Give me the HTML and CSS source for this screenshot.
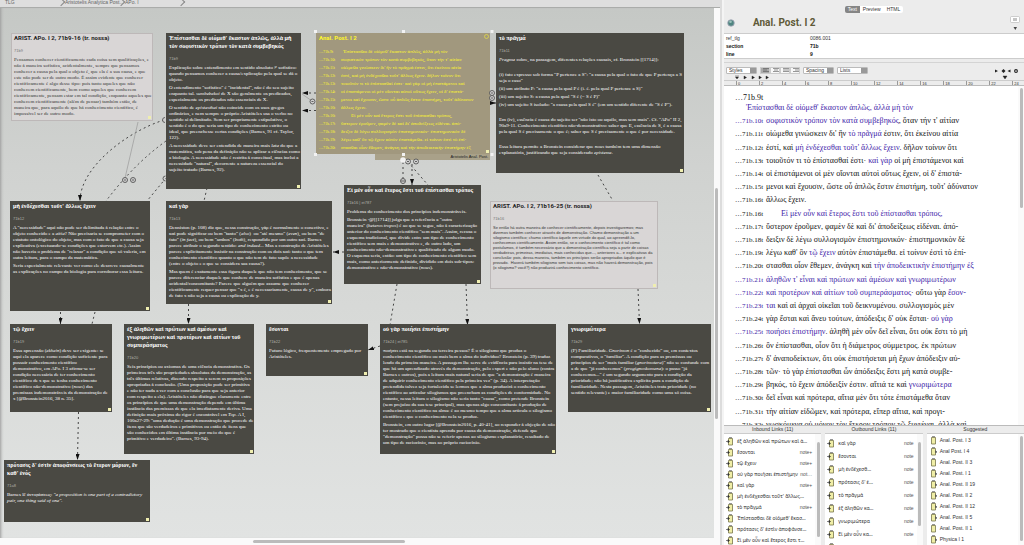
FILE: index.html
```html
<!DOCTYPE html>
<html lang="pt">
<head>
<meta charset="utf-8">
<title>Anal. Post. I 2</title>
<link rel="stylesheet" href="styles.css">
</head>
<body>
<svg class="defs" aria-hidden="true">
  <symbol id="doc" viewBox="0 0 8 9"><path d="M2.5 1.5h4v6.5h-4z" fill="#f0eea6" stroke="#77754a" stroke-width=".8"/><path d="M3.5 1v-.6h2V1" stroke="#555" fill="none" stroke-width=".7"/></symbol>
  <symbol id="doc-in" viewBox="0 0 8 9"><use href="#doc"/><path d="M0 4.500h2M2 3.300l1.500 1.200-1.500 1.200z" stroke="#333" stroke-width=".6" fill="#333"/></symbol>
  <symbol id="doc-out" viewBox="0 0 8 9"><use href="#doc"/><path d="M6 4.500h1M6.500 3.500l1.500 1.500-1.500 1z" stroke="#555" stroke-width=".5" fill="#555"/></symbol>
</svg>
<div class="app">
  <main class="map">
    <nav class="crumbs">
      <a class="crumb" href="#">TLG</a><a class="crumb" href="#">Aristotelis Analytica Post…</a><a class="crumb" href="#">APo. I</a>
    </nav>
    <div class="stage">
      <div class="canvas">
        <svg class="links" width="714" height="530" viewBox="0 8 714 530" aria-hidden="true">
          <defs>
            <marker id="arrow" viewBox="0 0 6 4" refX="6" refY="2" markerWidth="6" markerHeight="4" markerUnits="userSpaceOnUse" orient="auto"><path d="M0 0l6 2-6 2z" fill="#111"/></marker>
          </defs>
          <g class="dash">
            <path d="M164 120C126 132 80 168 80 201" marker-end="url(#arrow)"/>
            <path d="M166 141Q134 164 106 201"/>
            <path d="M166 178L147 201"/>
            <path d="M207 188L204 201"/>
            <path d="M316 93H302" marker-end="url(#arrow)"/>
            <path d="M316 110.500H302" marker-end="url(#arrow)"/>
            <path d="M489 103H496" marker-end="url(#arrow)"/>
            <path d="M403 162V185"/>
            <path d="M412 164V185" marker-end="url(#arrow)"/>
            <path d="M408 162L428 185"/>
            <path d="M598 175L613 201"/>
            <path d="M344 252H333" marker-end="url(#arrow)"/>
            <path d="M60.500 312V324" marker-end="url(#arrow)"/>
            <path d="M95 312L92 324"/>
            <path d="M188.500 304V324" marker-end="url(#arrow)"/>
            <path d="M397 284L390 325"/>
            <path d="M466 284L467.500 325" marker-end="url(#arrow)"/>
            <path d="M638 289L639.500 324" marker-end="url(#arrow)"/>
            <path d="M78.500 412L77.500 460" marker-end="url(#arrow)"/>
            <path d="M380 346L368 350" marker-end="url(#arrow)"/>
          </g>
          <path class="thin" d="M138 122L125 178M302 94L312 101"/>
        </svg>

        <article class="note light n1">
          <h2>ARIST. APo. I 2, 71b9-16 (tr. nossa)</h2>
          <small>71b9</small>
          <p>Pensamos conhecer cientificamente cada coisa sem qualificações, e
não à maneira sofística, acidentalmente, sempre que pensamos
conhecer a causa pela qual o objeto é, que ela é a sua causa, e que
este não pode ser de outro modo. É assim evidente que conhecer
cientificamente é algo desse tipo: pois tanto aqueles que não
conhecem cientificamente, bem como aqueles que conhecem
cientificamente, pensam estar em tal condição, enquanto aqueles que
conhecem cientificamente (além de pensar) também estão, de
maneira que, para aquilo de que há conhecimento científico, é
impossível ser de outro modo.</p>
        </article>
        <article class="note n2">
          <h2>Ἐπίστασθαι δὲ οἰόμεθ' ἕκαστον ἁπλῶς, ἀλλὰ μὴ
τὸν σοφιστικὸν τρόπον τὸν κατὰ συμβεβηκός</h2>
          <small>71b9</small>
          <p>Explicação sobre entendimento em sentido absoluto ≠ sofístico:
quando pensamos conhecer a causa/explicação pela qual se dá o
objeto.</p>
          <p>O entendimento "sofístico" é "incidental", não é do seu sujeito
enquanto tal. <i>sumbebēkoi</i> de X são geralmente os predicados,
especialmente os predicados não essenciais de X.</p>
          <p>O sentido de <i>epistasthai</i> não coincide com os usos gregos
ordinários, e nem sempre o próprio Aristóteles usa o verbo no
sentido aí delimitado. Sem ser propriamente estipulativo, o
sentido é o do que seria um tipo de conhecimento estrito ou
ideal, que preenchesse certas condições (Barnes, 91 cf. Taylor,
122).</p>
          <p>A necessidade deve ser entendida de maneira mais <i>lata</i> do que a
matemática, sob pena da definição não se aplicar a ciências como
a biologia. A necessidade não é restrita à conceitual, mas inclui a
necessidade "natural", decorrente a natureza essencial do
sujeito tratado (Barnes, 92).</p>
        </article>
        <div class="alias">Aristotelis Anal. Post.</div>
        <article class="note picked n3">
          <h2>Anal. Post. I 2</h2>
          <ol>
            <li><b>…71b.9t</b><span class="in">Ἐπίστασθαι δὲ οἰόμεθ' ἕκαστον ἁπλῶς, ἀλλὰ μὴ τὸν</span></li>
            <li><b>…71b.10t</b><span>σοφιστικὸν τρόπον τὸν κατὰ συμβεβηκός, ὅταν τήν τ' αἰτίαν</span></li>
            <li><b>…71b.11t</b><span>οἰώμεθα γινώσκειν δι' ἣν τὸ πρᾶγμά ἐστιν, ὅτι ἐκείνου αἰτία</span></li>
            <li><b>…71b.12t</b><span>ἐστί, καὶ μὴ ἐνδέχεσθαι τοῦτ' ἄλλως ἔχειν. δῆλον τοίνυν ὅτι</span></li>
            <li><b>…71b.13t</b><span>τοιοῦτόν τι τὸ ἐπίστασθαί ἐστι· καὶ γὰρ οἱ μὴ ἐπιστάμενοι καὶ</span></li>
            <li><b>…71b.14t</b><span>οἱ ἐπιστάμενοι οἱ μὲν οἴονται αὐτοὶ οὕτως ἔχειν, οἱ δ' ἐπιστά-</span></li>
            <li><b>…71b.15t</b><span>μενοι καὶ ἔχουσιν, ὥστε οὗ ἁπλῶς ἔστιν ἐπιστήμη, τοῦτ' ἀδύνατον</span></li>
            <li><b>…71b.16t</b><span>ἄλλως ἔχειν.</span></li>
            <li><b>…71b.16t</b><span class="in2">Εἰ μὲν οὖν καὶ ἕτερος ἔστι τοῦ ἐπίστασθαι τρόπος,</span></li>
            <li><b>…71b.17t</b><span>ὕστερον ἐροῦμεν, φαμὲν δὲ καὶ δι' ἀποδείξεως εἰδέναι. ἀπό-</span></li>
            <li><b>…71b.18t</b><span>δειξιν δὲ λέγω συλλογισμὸν ἐπιστημονικόν· ἐπιστημονικὸν δὲ</span></li>
            <li><b>…71b.19t</b><span>λέγω καθ' ὃν τῷ ἔχειν αὐτὸν ἐπιστάμεθα. εἰ τοίνυν ἐστὶ τὸ ἐπί-</span></li>
            <li><b>…71b.20t</b><span>στασθαι οἷον ἔθεμεν, ἀνάγκη καὶ τὴν ἀποδεικτικὴν ἐπιστήμην ἐξ</span></li>
          </ol>
        </article>
        <article class="note n4">
          <h2>τὸ πρᾶγμά</h2>
          <small>71b11</small>
          <p><i>Pragma</i> cobre, na passagem, diferentes relações causais, cf. Bronstein [[1714]]:</p>
          <p class="apart">(i) fato expresso sob forma "P pertence a S": "a causa pela qual o fato de que P pertença a S
seja o caso"</p>
          <p>(ii) um atributo P: "a causa pela qual P é (i. é. pela qual P pertence a S)"</p>
          <p>(iii) um sujeito S: a causa pela qual "S é (= S é P)"</p>
          <p>(iv) um sujeito S isolado: "a causa pela qual S é" (em um sentido diferente de "S é P").</p>
          <p class="apart">Em (iv), essência é causa do sujeito ser "não isto ou aquilo, mas sem mais". Cf. "APo" II 2,
90a9-11. Conhecimento científico não-demonstrativo: saber que E, essência de S, é a causa
pela qual S é precisamente o que é; saber que S é precisamente o que é por necessidade.</p>
          <p class="apart">Essa leitura permite a Bronstein considerar que <i>nous</i> também tem uma dimensão
explanatória, justificando que seja considerado <i>epistēmē</i>.</p>
        </article>
        <article class="note n5">
          <h2>μὴ ἐνδέχεσθαι τοῦτ' ἄλλως ἔχειν</h2>
          <small>71b12</small>
          <p>A "necessidade" aqui não pode ser delimitada à relação entre o
objeto conhecido e a <i>aitia</i>? Não precisaria se comprometer com o
estatuto ontológico do objeto, mas com o fato de que a causa seja
explicativa (excetuando-se condições que estorvem etc.). Assim
não haveria o problema de "relaxar" a condição que só valeria, em
outra leitura, para o campo da matemática.</p>
          <p>Seria especialmente relevante ver como ele descreve causalmente
as explicações no campo da biologia para corroborar essa leitura.</p>
        </article>
        <article class="note n6">
          <h2>καὶ γὰρ</h2>
          <small>71b13</small>
          <p>Denniston (p. 108) diz que, nessa construção, γάρ é normalmente o conectivo, e
καί pode significar ou bem "tanto" (<i>also</i>)  ou "até mesmo" (<i>even</i>), ou bem "de
fato" (<i>in fact</i>), ou bem "ambos" (<i>both</i>), respondido por um outro καί. Barnes
parece atribuir o segundo sentido: <i>and indeed</i>... Mas a construção de Aristóteles
parece explicitamente insistir na construção com os dois καί: tanto o que tem
conhecimento científico quanto o que não tem de fato supõe a necessidade
(entre o objeto e o que se considera sua causa?).</p>
          <p>Mas quem é exatamente essa figura daquele que não tem conhecimento, que se
parece diferenciar daquele que conhece de maneira sofística e que é apenas
acidental/concomitante? Parece que alguém que assume que conhecer
cientificamente requer pensar que "x é, e é necessariamente, causa de y", embora
de fato x não seja a causa ou explicação de y.</p>
        </article>
        <article class="note n7">
          <h2>Εἰ μὲν οὖν καὶ ἕτερος ἔστι τοῦ ἐπίστασθαι τρόπος</h2>
          <small>71b16 | et787</small>
          <p>Problema do conhecimento dos princípios indemonstráveis.</p>
          <p>Bronstein -@[[1714]] julga que a referência a "outra
maneira" (<i>heteros tropos</i>) é ao que se segue, não à caracterização
anterior do conhecimento científico "sem mais". Assim, recusa o
esquema tradicional, que divide entre um tipo de conhecimento
científico sem mais e demonstrativo e, de outro lado, um
conhecimento não-demonstrativo e qualificado de algum modo.
O esquema seria, então: um tipo de conhecimento científico sem
mais, como anteriormente definido, dividido em dois sub-tipos:
demonstrativo e não-demonstrativo (<i>nous</i>).</p>
        </article>
        <article class="note light n8">
          <h2>ARIST. APo. I 2, 71b16-25 (tr. nossa)</h2>
          <small>71b16</small>
          <p>Se então há outra maneira de conhecer cientificamente, depois investigaremos; mas
dizemos também conhecer através de demonstração. Chamo demonstração a um
silogismo científico; chamo científico àquele em virtude do qual, ao apreendê-lo,
conhecemos cientificamente. Assim então, se o conhecimento científico é tal como
postulamos, é também necessário que a demonstração científica seja a partir de coisas
verdadeiras, primeiras, imediatas, mais conhecidas que..., anteriores a... e explicativas da
conclusão: pois, dessa maneira, também os princípios serão apropriados àquilo que é
provado.  Haverá também silogismo sem tais coisas, mas não haverá demonstração, pois
(o silogismo? você?) não produzirá conhecimento científico.</p>
        </article>
        <article class="note n9">
          <h2>τῷ ἔχειν</h2>
          <small>71b19</small>
          <p>Essa apreensão (<i>ekhein</i>) deve ser exigente: se
aqui ela aparece como condição suficiente para
possuir conhecimento científico
demonstrativo, em APo. I 3 afirma-se ser
condição necessária de ter conhecimento
científico de x que se tenha conhecimento
científico não-demonstrativo (<i>nous</i>) das
premissas indemonstráveis da demonstração de
x [@Bronstein2016, 38 n. 35].</p>
        </article>
        <article class="note n10">
          <h2>ἐξ ἀληθῶν καὶ πρώτων καὶ ἀμέσων καὶ
γνωριμωτέρων καὶ προτέρων καὶ αἰτίων τοῦ
συμπεράσματος</h2>
          <small>71b20</small>
          <p>Seis princípios ou axiomas de uma ciência demonstrativa. Os
primeiros três são propriedades absolutas da demonstração, as
três últimas relativas, dizendo respeito a serem as proposições
apropriadas à conclusão. (Uma proposição pode ser primitiva
e não ter nada a ver com a conclusão para que seja anterior
com respeito a ela). Aristóteles não distingue claramente entre
os princípios de que uma demonstração depende em última
instância das premissas de que ela imediatamente deriva. Uma
definição mais próxima do rigor é encontrável em <i>Top.</i> A I,
100a27-29: "uma dedução é uma demonstração que procede de
itens que são verdadeiros e primitivos ou então de itens que
são conhecidos em última instância por meio do que é
primitivo e verdadeiro". (Barnes, 93-94).</p>
        </article>
        <article class="note n11">
          <h2>ἔσονται</h2>
          <small>71b22</small>
          <p>Futuro lógico, frequentemente empregado por
Aristóteles.</p>
        </article>
        <article class="note n12">
          <h2>οὐ γὰρ ποιήσει ἐπιστήμην</h2>
          <small>71b24 | et785</small>
          <p>ποιήσει está na segunda ou terceira pessoa? É o silogismo que produz o
conhecimento científico ou mais bem a alma do indivíduo? Bronstein (p. 39) traduz
lendo da primeira maneira. A passagem lhe serve de evidência para insistir na tese de
que há um aprendizado através da demonstração, pelo expert e não pelo aluno (contra
Barnes e outros), pois a leitura mais natural seria de que "a demonstração é maneira
de adquirir conhecimento científico pela primeira vez" (p. 34). A interpretação
pretendida talvez seja fortalecida se lermos que a alma produzirá o conhecimento
científico ao articular silogismos que preencham as condições de conformidade. No
entanto, nessa leitura o silogismo não seria tanto "causa", como pretende Bronstein
(sem prejuízo da sua tese principal), mas apenas algo concomitante à produção de
conhecimento científico na alma: é ao mesmo tempo que a alma articula o silogismo
científico e que o conhecimento nela se produz.</p>
          <p>Bronstein, em outro lugar [@Bronstein2016, p. 40-41], ao responder à objeção de não
ter mostrado que o cientista aprenda por causa da demonstração, defende que
"demonstração" possa não se referir apenas ao silogismo explanatório, resultado de
um tipo de raciocínio, mas ao próprio raciocínio.</p>
        </article>
        <article class="note n13">
          <h2>γνωριμώτερα</h2>
          <small>71b29</small>
          <p>(F) Familiaridade. <i>Gnōrimon</i> é o "conhecido" ou, em contextos
comparativos, o "familiar". A condição para as premissas ou
princípios de ser "mais familiar (<i>gnōrimōtera</i>)" não se confunde com
a de que "já conhecemos" (<i>progignōskomena</i>): o passo "já
conhecemos..." é um segundo argumento para a condição da
prioridade; não há justificativa explícita para a condição de
familiaridade. Nesta passagem, Aristóteles trata prioridade (no
sentido relevante) e maior familiaridade como uma só coisa.</p>
        </article>
        <article class="note n14">
          <h2>πρότασις δ' ἐστὶν ἀποφάνσεως τὸ ἕτερον μόριον, ἓν
καθ' ἑνός</h2>
          <small>71a8</small>
          <p>Barnes lê ἀντιφάσεως: <i>"a proposition is one part of a contradictory
pair, one thing said of one".</i></p>
        </article>

        <svg class="links" width="714" height="530" viewBox="0 8 714 530" aria-hidden="true">
          <g class="knob">
            <circle cx="125" cy="180" r="2.500"/><circle cx="133" cy="180" r="2.500"/>
            <path d="M165 117.500a2.500 2.500 0 0 0 0 5M165.500 176a2.500 2.500 0 0 0 0 5"/>
            <circle cx="312.500" cy="101.500" r="2.500"/>
            <circle cx="492" cy="93" r="2.500"/><circle cx="492" cy="98" r="2.500"/>
            <circle cx="408" cy="161.500" r="2.500"/><circle cx="416" cy="161.500" r="2.500"/><circle cx="403" cy="181" r="2.500"/>
            <path d="M124 180h2M132 180h2M311.500 101.500h2M491 93h2M491 98h2M407 161.500h2M415 161.500h2M401 181h4"/>
          </g>
          <g fill="#f2f2f2">
            <path d="M314 30h3v3h-3zM402 30h3v3h-3zM490.500 30h3v3h-3zM314 153h3v3h-3zM402 153h3v3h-3zM490.500 153h3v3h-3z"/>
            <circle cx="403" cy="160" r="2.800"/>
          </g>
          <circle cx="486.500" cy="36.500" r="2" fill="none" stroke="#dfd84a" stroke-width=".8"/>
        </svg>
      </div>
      <div class="vbar"><i></i></div>
      <div class="hbar"><i></i></div>
    </div>
  </main>

  <aside class="pane">
    <div class="tabs"><button class="on">Text</button><button>Preview</button><button>HTML</button></div>
    <header class="head">
      <svg width="8" height="8" viewBox="0 0 8 8" aria-hidden="true"><circle cx="4" cy="4" r="3.300" fill="#4f8580" stroke="#aab" stroke-width=".8"/><circle cx="3.500" cy="2.800" r="1.300" fill="#9cc2bb"/></svg>
      <h1>Anal. Post. I 2</h1>
      <button class="menu" aria-label="Menu"><svg width="10" height="15" viewBox="0 0 10 15"><rect x=".5" y=".5" width="9" height="6" rx="1" fill="#fff" stroke="#bbb" stroke-width=".7"/><path d="M3 2.500h4M3 3.500h4M3 4.500h4" stroke="#888" stroke-width=".5"/><path d="M3.500 11h3.500l-1.700 3z" fill="#444"/></svg></button>
    </header>
    <table class="attrs">
      <tr><th>ref_tlg</th><td>0086.001</td></tr>
      <tr class="b"><th>section</th><td>71b</td></tr>
      <tr class="b"><th>line</th><td>9</td></tr>
    </table>
    <div class="tools">
      <select aria-label="Styles"><option>Styles</option></select>
      <div class="aligns">
        <button class="on" aria-label="Left"><svg viewBox="0 0 6 5"><path d="M0 .5h6M0 2h4M0 3.500h6"/></svg></button><button aria-label="Center"><svg viewBox="0 0 6 5"><path d="M0 .5h6M1 2h4M0 3.500h6"/></svg></button><button aria-label="Justify"><svg viewBox="0 0 6 5"><path d="M0 .5h6M0 2h6M0 3.500h6"/></svg></button><button aria-label="Right"><svg viewBox="0 0 6 5"><path d="M0 .5h6M2 2h4M0 3.500h6"/></svg></button>
      </div>
      <select aria-label="Spacing"><option>Spacing</option></select>
      <select aria-label="Lists"><option>Lists</option></select>
      <svg class="stops" width="25" height="6" viewBox="0 0 25 6" aria-hidden="true"><path d="M1 1.500l3 1.500-3 1.500zM9.500 1l2 2-2 2-2-2zM16.500 1.500l-3 1.500 3 1.500z" fill="#222"/><circle cx="22" cy="3" r="1.400" fill="none" stroke="#222" stroke-width="1.100"/></svg>
    </div>
    <div class="ruler">
      <svg class="pins" width="100%" height="5" aria-hidden="true"><path d="M11 1h4M11.500 2h3l-1.500 2zM20 1l2.500 1.500L20 4zM28 1l2.500 1.500L28 4zM35 1l2.500 1.500L35 4zM42 1l2.500 1.500L42 4zM279 1h4l-2 3z" fill="#222" stroke="#222" stroke-width=".4"/></svg>
      <ol><li>0</li><li>2</li><li>4</li><li>6</li><li>8</li><li>10</li><li>12</li><li>14</li><li>16</li><li>18</li><li>20</li><li>22</li><li>24</li></ol>
    </div>
    <section class="editor">
      <div class="text">
        <div class="first"><p>…71b.9t</p><p class="t1"><a href="#">Ἐπίστασθαι δὲ οἰόμεθ' ἕκαστον ἁπλῶς, ἀλλὰ μὴ τὸν</a></p></div>
        <p><a href="#"><b>…71b.10t</b>σοφιστικὸν τρόπον τὸν κατὰ συμβεβηκός</a>, ὅταν τήν τ' αἰτίαν</p>
        <p><b>…71b.11t</b>οἰώμεθα γινώσκειν δι' ἣν <a href="#">τὸ πρᾶγμά</a> ἐστιν, ὅτι ἐκείνου αἰτία</p>
        <p><b>…71b.12t</b>ἐστί, καὶ <a href="#">μὴ ἐνδέχεσθαι τοῦτ' ἄλλως ἔχειν</a>. δῆλον τοίνυν ὅτι</p>
        <p><b>…71b.13t</b>τοιοῦτόν τι τὸ ἐπίστασθαί ἐστι· <a href="#">καὶ γὰρ</a> οἱ μὴ ἐπιστάμενοι καὶ</p>
        <p><b>…71b.14t</b>οἱ ἐπιστάμενοι οἱ μὲν οἴονται αὐτοὶ οὕτως ἔχειν, οἱ δ' ἐπιστά-</p>
        <p><b>…71b.15t</b>μενοι καὶ ἔχουσιν, ὥστε οὗ ἁπλῶς ἔστιν ἐπιστήμη, τοῦτ' ἀδύνατον</p>
        <p><b>…71b.16t</b>ἄλλως ἔχειν.</p>
        <p><b class="wide">…71b.16t</b><a href="#">Εἰ μὲν οὖν καὶ ἕτερος ἔστι τοῦ ἐπίστασθαι τρόπος,</a></p>
        <p><b>…71b.17t</b>ὕστερον ἐροῦμεν, φαμὲν δὲ καὶ δι' ἀποδείξεως εἰδέναι. ἀπό-</p>
        <p><b>…71b.18t</b>δειξιν δὲ λέγω συλλογισμὸν ἐπιστημονικόν· ἐπιστημονικὸν δὲ</p>
        <p><b>…71b.19t</b>λέγω καθ' ὃν <a href="#">τῷ ἔχειν</a> αὐτὸν ἐπιστάμεθα. εἰ τοίνυν ἐστὶ τὸ ἐπί-</p>
        <p><b>…71b.20t</b>στασθαι οἷον ἔθεμεν, ἀνάγκη καὶ <a href="#">τὴν ἀποδεικτικὴν ἐπιστήμην ἐξ</a></p>
        <p><a href="#"><b>…71b.21t</b>ἀληθῶν τ' εἶναι καὶ πρώτων καὶ ἀμέσων καὶ γνωριμωτέρων</a></p>
        <p><a href="#"><b>…71b.22t</b>καὶ προτέρων καὶ αἰτίων τοῦ συμπεράσματος</a>· οὕτω γὰρ <a href="#">ἔσον-</a></p>
        <p><a href="#"><b>…71b.23t</b>ται</a> καὶ αἱ ἀρχαὶ οἰκεῖαι τοῦ δεικνυμένου. συλλογισμὸς μὲν</p>
        <p><b>…71b.24t</b>γὰρ ἔσται καὶ ἄνευ τούτων, ἀπόδειξις δ' οὐκ ἔσται· <a href="#">οὐ γὰρ</a></p>
        <p><a href="#"><b>…71b.25t</b>ποιήσει ἐπιστήμην</a>. ἀληθῆ μὲν οὖν δεῖ εἶναι, ὅτι οὐκ ἔστι τὸ μὴ</p>
        <p><b>…71b.26t</b>ὂν ἐπίστασθαι, οἷον ὅτι ἡ διάμετρος σύμμετρος. ἐκ πρώτων</p>
        <p><b>…71b.27t</b>δ' ἀναποδείκτων, ὅτι οὐκ ἐπιστήσεται μὴ ἔχων ἀπόδειξιν αὐ-</p>
        <p><b>…71b.28t</b>τῶν· τὸ γὰρ ἐπίστασθαι ὧν ἀπόδειξις ἔστι μὴ κατὰ συμβε-</p>
        <p><b>…71b.29t</b>βηκός, τὸ ἔχειν ἀπόδειξίν ἐστιν. αἴτιά τε καὶ <a href="#">γνωριμώτερα</a></p>
        <p><b>…71b.30t</b>δεῖ εἶναι καὶ πρότερα, αἴτια μὲν ὅτι τότε ἐπιστάμεθα ὅταν</p>
        <p><b>…71b.31t</b>τὴν αἰτίαν εἰδῶμεν, καὶ πρότερα, εἴπερ αἴτια, καὶ προγι-</p>
        <p><b>…71b.32t</b>νωσκόμενα οὐ μόνον τὸν ἕτερον τρόπον τῷ ξυνιέναι, ἀλλὰ καὶ</p>
      </div>
      <div class="vbar"><i></i></div>
    </section>
    <section class="lists">
      <div class="list inbound">
        <h3>Inbound Links (11)</h3>
        <ul>
          <li><svg><use href="#doc-in"/></svg><a href="#">ἐξ ἀληθῶν καὶ πρώτων καὶ ἀ…</a></li>
          <li><svg><use href="#doc-in"/></svg><a href="#">ἔσονται</a><em>note+</em></li>
          <li><svg><use href="#doc-in"/></svg><a href="#">τῷ ἔχειν</a><em>note+</em></li>
          <li><svg><use href="#doc-in"/></svg><a href="#">οὐ γὰρ ποιήσει ἐπιστήμην</a><em>not…</em></li>
          <li><svg><use href="#doc-in"/></svg><a href="#">καὶ γὰρ</a><em>note+</em></li>
          <li><svg><use href="#doc-in"/></svg><a href="#">μὴ ἐνδέχεσθαι τοῦτ' ἄλλως…</a></li>
          <li><svg><use href="#doc-in"/></svg><a href="#">τὸ πρᾶγμά</a><em>note+</em></li>
          <li><svg><use href="#doc-in"/></svg><a href="#">Ἐπίστασθαι δὲ οἰόμεθ' ἕκασ…</a></li>
          <li><svg><use href="#doc-in"/></svg><a href="#">πρότασις δ' ἐστὶν ἀποφάνσε…</a></li>
          <li><svg><use href="#doc-in"/></svg><a href="#">Εἰ μὲν οὖν καὶ ἕτερος ἔστι τ…</a></li>
        </ul>
        <div class="vbar"><i></i></div>
      </div>
      <div class="list outbound">
        <h3>Outbound Links (11)</h3>
        <ul>
          <li><svg><use href="#doc-in"/></svg><a href="#">καὶ γὰρ</a><em>note</em></li>
          <li><svg><use href="#doc-in"/></svg><a href="#">ἔσονται</a><em>note</em></li>
          <li><svg><use href="#doc-in"/></svg><a href="#">μὴ ἐνδέχεσθ…</a><em>note</em></li>
          <li><svg><use href="#doc-in"/></svg><a href="#">πρότασις δ' ἐ…</a><em>note</em></li>
          <li><svg><use href="#doc-in"/></svg><a href="#">τὸ πρᾶγμά</a><em>note</em></li>
          <li><svg><use href="#doc-in"/></svg><a href="#">ἐξ ἀληθῶν κα…</a><em>note</em></li>
          <li><svg><use href="#doc-in"/></svg><a href="#">γνωριμώτερα</a><em>note</em></li>
          <li><svg><use href="#doc-in"/></svg><a href="#">Εἰ μὲν οὖν κα…</a><em>note</em></li>
          <li><svg><use href="#doc-in"/></svg><a href="#">οὐ γὰρ ποιήσ…</a><em>note</em></li>
        </ul>
        <div class="vbar"><i></i></div>
      </div>
      <div class="list suggested">
        <h3>Suggested</h3>
        <ul>
          <li><svg><use href="#doc"/></svg><a href="#">Anal. Post. I 3</a></li>
          <li><svg><use href="#doc-out"/></svg><a href="#">Anal Post. I 4</a></li>
          <li><svg><use href="#doc"/></svg><a href="#">Anal. Post. II 3</a></li>
          <li><svg><use href="#doc-out"/></svg><a href="#">Anal. Post. I 1</a></li>
          <li><svg><use href="#doc-out"/></svg><a href="#">Anal. Post. II 19</a></li>
          <li><svg><use href="#doc-out"/></svg><a href="#">Anal. Post. II 2</a></li>
          <li><svg><use href="#doc-out"/></svg><a href="#">Anal. Post. II 12</a></li>
          <li><svg><use href="#doc-out"/></svg><a href="#">Anal. Post. II 5</a></li>
          <li><svg><use href="#doc"/></svg><a href="#">Anal. Post. II 1</a></li>
          <li><svg><use href="#doc-out"/></svg><a href="#">Physica I 1</a></li>
        </ul>
        <div class="vbar"><i></i></div>
      </div>
    </section>
  </aside>
</div>
</body>
</html>
```
FILE: styles.css
```css
* { box-sizing: border-box; }
body { margin: 0; font-family: "Liberation Sans", Arial, sans-serif; color: #333; }
h1, h2, h3, p, ol, ul { margin: 0; padding: 0; font-weight: normal; list-style: none; }
a { color: inherit; text-decoration: none; }
button, select { font: inherit; color: inherit; margin: 0; }
.defs { position: absolute; width: 0; height: 0; }

.app {
  display: grid;
  grid-template-columns: minmax(0, 1fr) minmax(240px, 29.500%);
  height: 100vh;
  overflow: hidden;
}

/* map side */
.map { display: flex; flex-direction: column; min-width: 0; min-height: 0; background: #fafafa; border-right: 2px solid #dcdcdc; }
.crumbs { display: flex; flex: none; height: 8px; padding-left: 5px; background: #dedede; border-bottom: 1px solid #aaacaa; overflow: hidden; }
.crumb { position: relative; width: 60px; height: 7px; font-size: 5px; line-height: 5px; color: #666; white-space: nowrap; }
.crumb::after { content: ""; position: absolute; right: 1px; top: -1px; width: 5px; height: 5px; border-top: 1px solid #888; border-right: 1px solid #888; transform: rotate(45deg); }
.stage { flex: 1; min-height: 0; display: grid; grid-template: minmax(0, 1fr) 7px / minmax(0, 1fr) 6px; }
.canvas { position: relative; overflow: hidden; background: linear-gradient(#c5c8c5, #d0d2d0 30%, #d8dad8 60%, #e1e3e2); box-shadow: inset 3px 0 3px -2px #999; }
.links { position: absolute; left: 0; top: 0; }
.dash { fill: none; stroke: #444; stroke-width: 1; stroke-dasharray: 2 3; }
.thin { fill: none; stroke: #999; stroke-width: .7px; }
.knob { fill: #d0d0d0; stroke: #555; stroke-width: .9px; }

.vbar { display: flex; background: #fafafa; min-height: 0; }
.vbar i { width: 3px; margin: auto; border-radius: 2px; background: #bbb; }
.hbar { background: #fafafa; padding: 2px 0 0 35.400%; }
.hbar i { display: block; width: 33%; height: 3px; border-radius: 2px; background: #bbb; }
.stage .vbar i { height: 43.500%; margin-top: 180px; }

.note { position: absolute; display: flex; flex-direction: column; padding: 1px 3px; background: #4a4943; color: #fff; font: bold 5px/6px "Liberation Serif", "Times New Roman", serif; overflow: hidden; }
.note > * { white-space: pre; flex: none; }
.note::after { content: ""; position: absolute; right: 1px; bottom: 1px; width: 3px; height: 3px; background: #efeeb0; }
.note h2 { font: bold 6px/8px "Liberation Serif", serif; margin-bottom: 5px; color: #fff; }
.note small { font: 4px/7px "Liberation Sans", sans-serif; color: #b0b0aa; margin-bottom: 3px; }
.note p { margin-bottom: 2px; }
.note .apart { margin-top: 7px; }
.note.light { background: #d9d6d6; border: 1px solid #bdb8b8; color: #333; padding: 0 2px; }
.note.light h2 { font: bold 6px/8px Roboto, sans-serif; color: #222; }
.note.light small { color: #777; }
.note.picked { background: #a1987e; color: #fff72a; font-weight: normal; }
.note.picked h2 { font: bold 6px/8px Roboto, sans-serif; color: #fff72a; margin-bottom: 6px; }
.note.picked > ol { white-space: nowrap; }
.picked li { display: flex; line-height: 8px; }
.picked b { flex: none; width: 22px; font-size: 4px; font-weight: normal; }
.picked .in { padding-left: 2px; }
.picked .in2 { padding-left: 10px; }
.alias { position: absolute; left: 375px; top: 146px; width: 115px; height: 6px; background: #a9a189; color: #222; font-size: 4px; line-height: 6px; text-align: right; padding-right: 2px; }

.n1 { left: 11px; top: 25px; width: 142px; height: 88px; }
.n2 { left: 166px; top: 25px; width: 135px; height: 156px; }
.n3 { left: 316px; top: 25px; width: 174px; height: 121px; }
.n4 { left: 496px; top: 25px; width: 188px; height: 140px; }
.n5 { left: 10px; top: 193px; width: 140px; height: 110px; }
.n6 { left: 166px; top: 193px; width: 166px; height: 103px; }
.n7 { left: 344px; top: 177px; width: 137px; height: 99px; }
.n8 { left: 490px; top: 193px; width: 168px; height: 88px; }
.n9 { left: 10px; top: 316px; width: 102px; height: 88px; }
.n10 { left: 124px; top: 316px; width: 130px; height: 130px; }
.n11 { left: 266px; top: 316px; width: 102px; height: 52px; }
.n12 { left: 380px; top: 316px; width: 176px; height: 130px; }
.n13 { left: 568px; top: 316px; width: 143px; height: 88px; }
.n14 { left: 4px; top: 452px; width: 146px; height: 62px; }
.n8 p { font: 4px/5px "Liberation Sans", sans-serif; }

/* text side */
.pane { display: flex; flex-direction: column; min-width: 0; min-height: 0; border-left: 2px solid #f4f4f4; background: #ececec; }
.tabs { flex: none; display: flex; justify-content: center; padding-top: 6px; }
.tabs button { font-size: 5px; line-height: 7px; height: 7px; padding: 0 3px; border: 0; background: #fff; }
.tabs button:first-child { border-radius: 2px 0 0 2px; }
.tabs button:last-child { border-radius: 0 2px 2px 0; }
.tabs .on { background: #858585; color: #fff; }
.head { flex: none; display: flex; align-items: center; height: 20px; padding: 0 4px 0 3px; }
.head h1 { flex: 1; margin-left: 18px; font: bold 10px/14px Roboto, sans-serif; color: #5f5a38; }
.menu { padding: 0; border: 0; background: none; height: 15px; line-height: 0; }
.attrs { flex: none; border-collapse: collapse; width: 100%; background: #fff; border-top: 1px solid #ccc; border-bottom: 1px solid #ccc; font-size: 5px; line-height: 8px; }
.attrs th, .attrs td { padding: 0 2px; text-align: left; font-weight: normal; }
.attrs th { width: 28%; }
.attrs .b > * { font-weight: bold; color: #111; }
.tools { flex: none; display: flex; align-items: center; gap: 3px; margin-top: 3px; padding: 2px 5px 0 2px; height: 14px; border-top: 1px solid #d4d4d4; font-size: 5px; }
.tools select { appearance: none; width: 31px; height: 7px; padding: 0 2px; border: 1px solid #bbb; border-radius: 1px; line-height: 5px; background: linear-gradient(90deg, #fff 80%, #999 80%); }
.aligns { display: flex; }
.aligns button { width: 10px; height: 7px; padding: 0 2px; border: 1px solid #ccc; background: #f8f8f8; line-height: 0; }
.aligns .on { background: #aaa; }
.aligns svg { width: 6px; height: 5px; stroke: #555; stroke-width: .6px; display: block; }
.stops { margin-left: auto; }
.ruler { flex: none; height: 11px; margin-top: -1px; border-bottom: 1px solid #bbb; }
.pins { display: block; }
.ruler ol { display: flex; padding-left: 12px; font-size: 4px; line-height: 5px; border-top: 1px solid #ccc; overflow: hidden; }
.ruler li { flex: 0 0 8%; border-left: 1px solid #999; height: 4px; padding-left: 1px; }
.editor { flex: 1; min-height: 0; display: flex; background: #fff; overflow: hidden; }
.text { flex: 1; height: calc(100% + 5px); display: flex; flex-direction: column; justify-content: space-between; padding: 7px 0 0 11px; font: 8px/10px "Liberation Serif", serif; color: #111; white-space: nowrap; }
.text a { color: #3d22a8; }
.text b { display: inline-block; width: 31px; font-size: 7px; font-weight: normal; }
.text b.wide { width: 46px; }
.first .t1 { padding-left: 11px; }
.editor .vbar { width: 6px; }
.editor .vbar i { height: 120px; margin-top: 2px; }
.lists { flex: none; display: grid; grid-template-columns: 1fr 1fr 1fr; gap: 4px; height: 120px; border-top: 1px solid #bbb; }
.list { display: grid; grid-template: 8px minmax(0, 1fr) / minmax(0, 1fr) 6px; background: #fff; min-height: 0; overflow: hidden; }
.list h3 { grid-column: 1 / -1; background: #ececec; border-bottom: 1px solid #ccc; text-align: center; font-size: 5px; line-height: 7px; }
.list ul { padding-top: 2px; overflow: hidden; font: 5px/11px "Noto Sans", sans-serif; }
.list li { display: flex; align-items: center; height: 11px; padding: 0 3px 0 2px; white-space: nowrap; }
.outbound ul { padding-top: 3px; }
.outbound li { height: 13px; }
.suggested ul { padding-top: 1px; }
.suggested li { font-family: "Liberation Sans", sans-serif; }
.list svg { flex: none; width: 8px; height: 9px; margin-right: 3px; }
.list a { flex: 1 0 auto; }
.list em { font: 5px/11px "Liberation Sans", sans-serif; color: #555; }
.list .vbar i { height: 95px; margin-top: 8px; }
.outbound .vbar i { height: 84px; }
.suggested .vbar i { height: 105px; margin-top: 2px; }
```
